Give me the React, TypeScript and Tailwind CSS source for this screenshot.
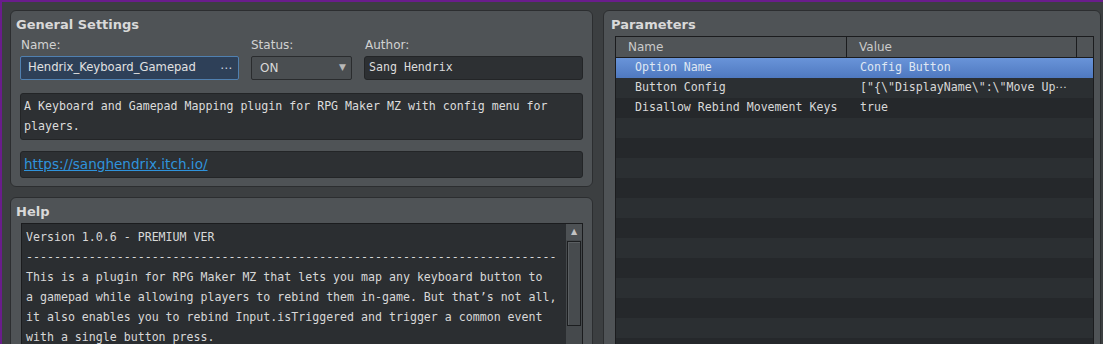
import React from 'react';

const sans = { fontFamily: '"DejaVu Sans", "Noto Sans", sans-serif' };
const mono = { fontFamily: '"DejaVu Sans Mono", "Liberation Mono", monospace' };

const helpLines = [
  'Version 1.0.6 - PREMIUM VER',
  '-'.repeat(76),
  'This is a plugin for RPG Maker MZ that lets you map any keyboard button to',
  'a gamepad while allowing players to rebind them in-game. But that’s not all,',
  'it also enables you to rebind Input.isTriggered and trigger a common event',
  'with a single button press.',
];

const params = [
  { name: 'Option Name', value: 'Config Button', elided: false },
  { name: 'Button Config', value: '["{\\"DisplayName\\":\\"Move Up', elided: true },
  { name: 'Disallow Rebind Movement Keys', value: 'true', elided: false },
];

const Panel: React.FC<{ title: string; className?: string; children: React.ReactNode }> = ({ title, className, children }) => (
  <div className={`bg-[#4f5356] border border-[#2c2e30] rounded-[6px] ${className || ''}`}>
    <div className="h-[25px] leading-[25px] pl-[5px] pt-[1px] text-[13px] font-bold text-[#d9d9d9]" style={sans}>
      {title}
    </div>
    {children}
  </div>
);

const App: React.FC = () => {
  const emptyRows = Array.from({ length: 14 }, (_, i) => i + params.length);

  return (
    <div className="w-[1103px] h-[344px] overflow-hidden bg-[#6a1d8c]">
      <div className="mt-[2px] ml-[2px] h-[342px] bg-[#3c3f41] flex gap-[10px] pl-[8px] pt-[8px]">
        {/* left column */}
        <div className="w-[583px] flex flex-col gap-[10px] shrink-0">
          <Panel title="General Settings" className="h-[177px] shrink-0">
            <div className="px-[9px]">
              <div className="flex gap-[12px] text-[12px] text-[#d2d2d2]" style={sans}>
                <div className="w-[219px]">
                  <div className="h-[18px] leading-[18px] pl-[1px]">Name:</div>
                  <div className="mt-[2px] h-[24px] bg-[#2e4058] border border-[#5080b0] rounded-[2px] flex items-center justify-between pl-[7px] pr-[6px] text-[11.6px] text-[#e2e2e2]">
                    <span>Hendrix_Keyboard_Gamepad</span>
                    <span className="text-[12px] text-[#cfd6e0]">⋯</span>
                  </div>
                </div>
                <div className="w-[101px]">
                  <div className="h-[18px] leading-[18px]">Status:</div>
                  <div className="mt-[2px] h-[24px] bg-[#4a4e51] border border-[#2a2c2e] rounded-[2px] flex items-center justify-between pl-[8px] pr-[5px] text-[#d8d8d8]">
                    <span>ON</span>
                    <span className="text-[9px] text-[#b8b8b8]">▼</span>
                  </div>
                </div>
                <div className="w-[219px]">
                  <div className="h-[18px] leading-[18px] pl-[1px]">Author:</div>
                  <div className="mt-[2px] h-[24px] bg-[#2d3033] border border-[#232527] rounded-[3px] flex items-center pl-[4px] text-[11.6px] text-[#dcdcdc]" style={mono}>
                    Sang Hendrix
                  </div>
                </div>
              </div>
              <div className="mt-[13px] h-[47px] bg-[#2d3033] border border-[#232527] rounded-[3px] pl-[3px] pt-[2px] text-[11.6px] leading-[20px] text-[#dcdcdc]" style={mono}>
                <div className="whitespace-pre">A Keyboard and Gamepad Mapping plugin for RPG Maker MZ with config menu for</div>
                <div className="whitespace-pre">players.</div>
              </div>
              <div className="mt-[11px] h-[27px] bg-[#2d3033] border border-[#232527] rounded-[3px] pl-[3px] flex items-center text-[13.6px]" style={sans}>
                <span className="text-[#2f93dc] underline">https://sanghendrix.itch.io/</span>
              </div>
            </div>
          </Panel>

          <Panel title="Help" className="flex-1 min-h-[200px]">
            <div className="ml-[10px] mr-[9px] h-[200px] border border-[#1b1c1e] bg-[#2b2e31] flex">
              <div className="flex-1 pl-[4px] pt-[3px] text-[11.6px] leading-[20px] text-[#d8d8d8]" style={mono}>
                {helpLines.map((l, i) => (
                  <div key={i} className="whitespace-pre">{l}</div>
                ))}
              </div>
              <div className="w-[16px] bg-[#45494c] flex flex-col">
                <div className="h-[16px] bg-[#4d5154] flex items-center justify-center text-[8px] text-[#c4c4c4]" style={sans}>▲</div>
                <div className="mt-[1px] mx-[1px] h-[85px] bg-[#474b4e] border border-[#1c1e20] shadow-[inset_1px_1px_0_#5a5e61]" />
              </div>
            </div>
          </Panel>
        </div>

        {/* right panel */}
        <div className="w-[498px] shrink-0 h-[400px] bg-[#4f5356] border border-[#2c2e30] rounded-[6px]">
          <div className="h-[25px] leading-[25px] pl-[7px] pt-[1px] text-[13px] font-bold text-[#d9d9d9]" style={sans}>
            Parameters
          </div>
          <div className="ml-[11px] w-[479px] border border-[#1b1c1e] bg-[#25282b]">
            <div className="h-[21px] flex bg-[#505457] border-b border-[#1b1c1e] text-[12px] text-[#cacaca]" style={sans}>
              <div className="w-[231px] pl-[12px] leading-[20px] border-r border-[#1b1c1e]">Name</div>
              <div className="w-[230px] pl-[12px] leading-[20px] border-r border-[#1b1c1e]">Value</div>
              <div className="flex-1" />
            </div>
            {params.map((p, i) => (
              <div
                key={p.name}
                className={`h-[20px] flex items-center text-[11.6px] whitespace-pre ${
                  i === 0
                    ? 'bg-gradient-to-b from-[#6994d9] to-[#4f79c0] text-[#dfe7f3]'
                    : i % 2 === 1
                    ? 'bg-[#2b2f32] text-[#d8d8d8]'
                    : 'bg-[#25282b] text-[#d8d8d8]'
                }`}
                style={mono}
              >
                <div className="w-[232px] pl-[19px]">{p.name}</div>
                <div className="pl-[12px]">
                  {p.value}
                  {p.elided && <span style={sans}>⋯</span>}
                </div>
              </div>
            ))}
            {emptyRows.map((i) => (
              <div key={i} className={`h-[20px] ${i % 2 === 1 ? 'bg-[#2b2f32]' : 'bg-[#25282b]'}`} />
            ))}
          </div>
        </div>
      </div>
    </div>
  );
};

export default App;
